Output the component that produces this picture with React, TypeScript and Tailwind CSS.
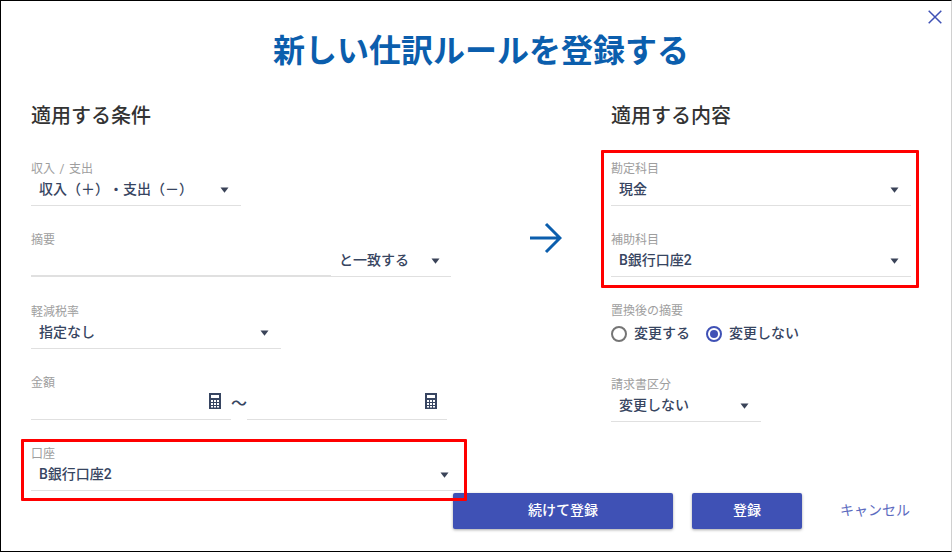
import type { ReactNode } from "react";

const fontStack = { fontFamily: '"Roboto", "Noto Sans CJK JP", sans-serif' };

function Caret() {
  return (
    <svg width="9" height="6" viewBox="0 0 9 6" className="shrink-0">
      <polygon points="0.5,0.5 8.5,0.5 4.5,5.8" fill="#3a4358" />
    </svg>
  );
}

function CalcIcon() {
  return (
    <svg width="12" height="16" viewBox="0 0 12 16" className="shrink-0">
      <path
        fill="#374561"
        fillRule="evenodd"
        d="M0 0h12v16H0z M2 2v3h8V2z M2 7v2h2V7z M5 7v2h2V7z M8 7v2h2V7z M2 10v2h2v-2z M5 10v2h2v-2z M8 10v2h2v-2z M2 13v1.5h2V13z M5 13v1.5h2V13z M8 13v1.5h2V13z"
      />
    </svg>
  );
}

function Label({ children }: { children: ReactNode }) {
  return (
    <div className="h-[16px] text-[12px] leading-[18px] text-[#9e9e9e] [word-spacing:1.5px]">{children}</div>
  );
}

function SelectField({
  label,
  value,
  className,
}: {
  label: string;
  value: string;
  className: string;
}) {
  return (
    <div className={className}>
      <Label>{label}</Label>
      <div className="flex h-[30px] items-center justify-between border-b border-[#e0e0e0] pb-[2px] pl-[8px] pr-[12px] text-[14px] font-medium text-[#374561] [text-spacing-trim:space-all]">
        <span>{value}</span>
        <Caret />
      </div>
    </div>
  );
}

function RadioOption({ label, checked }: { label: string; checked?: boolean }) {
  return (
    <div className="flex items-center gap-[7px]">
      <span
        className={`flex h-[16px] w-[16px] items-center justify-center rounded-full border-2 ${
          checked ? "border-[#3f51b5]" : "border-[#757575]"
        }`}
      >
        {checked && <span className="h-[8px] w-[8px] rounded-full bg-[#3f51b5]" />}
      </span>
      <span className="text-[14px] font-medium text-[#374561]">{label}</span>
    </div>
  );
}

export default function App() {
  return (
    <div
      style={fontStack}
      className="relative box-border flex h-[552px] w-[952px] flex-col overflow-hidden border border-r-[#d0d0d0] border-black bg-white"
    >
      {/* Close */}
      <svg width="14" height="14" viewBox="0 0 14 14" className="absolute left-[927px] top-[9px]">
        <path d="M0.7 0.7 13.3 13.3 M13.3 0.7 0.7 13.3" stroke="#3f51b5" strokeWidth="1.5" fill="none" />
      </svg>

      <h1 className="pl-[10px] pt-[30px] text-center text-[32px] font-bold leading-[40px] text-[#0b5ead]">
        新しい仕訳ルールを登録する
      </h1>

      <div className="mt-[29px] flex pl-[30px]">
        {/* 条件 */}
        <div className="w-[430px]">
          <h2 className="mb-[30px] h-[30px] text-[20px] font-medium leading-[32px] text-[#333333]">適用する条件</h2>

          <SelectField className="mb-[25px] w-[210px]" label="収入 / 支出" value="収入（＋）・支出（－）" />

          <div className="mb-[26px] w-[420px]">
            <Label>摘要</Label>
            <div className="flex h-[30px]">
              <div className="w-[300px] border-b-2 border-[#e0e0e0]" />
              <div className="flex w-[120px] items-center justify-between border-b border-[#e0e0e0] pb-[2px] pl-[8px] pr-[11px] text-[14px] font-medium text-[#374561]">
                <span>と一致する</span>
                <Caret />
              </div>
            </div>
          </div>

          <SelectField className="mb-[25px] w-[250px]" label="軽減税率" value="指定なし" />

          <div className="mb-[25px]">
            <Label>金額</Label>
            <div className="flex h-[30px]">
              <div className="flex w-[200px] items-start justify-end border-b border-[#e0e0e0] pr-[10px] pt-[3px]">
                <CalcIcon />
              </div>
              <div className="w-[16px] text-center text-[16px] font-medium leading-[28px] text-[#374561]">〜</div>
              <div className="flex w-[200px] items-start justify-end border-b border-[#e0e0e0] pr-[10px] pt-[3px]">
                <CalcIcon />
              </div>
            </div>
          </div>

          <SelectField className="w-[430px]" label="口座" value="B銀行口座2" />
        </div>

        {/* Arrow */}
        <svg width="32" height="32" viewBox="0 0 32 32" className="ml-[69px] mt-[122px] shrink-0 self-start">
          <path d="M0 16H30 M16 2 30 16 16 30" stroke="#0b5ead" strokeWidth="3" fill="none" />
        </svg>

        {/* 内容 */}
        <div className="ml-[49px] w-[300px]">
          <h2 className="mb-[30px] h-[30px] text-[20px] font-medium leading-[32px] text-[#333333]">適用する内容</h2>

          <SelectField className="mb-[25px]" label="勘定科目" value="現金" />
          <SelectField className="mb-[25px]" label="補助科目" value="B銀行口座2" />

          <div className="mb-[25px] h-[49px]">
            <Label>置換後の摘要</Label>
            <div className="mt-[5px] flex gap-[16px]">
              <RadioOption label="変更する" />
              <RadioOption label="変更しない" checked />
            </div>
          </div>

          <SelectField className="w-[150px]" label="請求書区分" value="変更しない" />
        </div>
      </div>

      {/* Actions */}
      <div className="mt-[2px] flex items-center pl-[452px]">
        <button
          type="button"
          className="h-[36px] w-[220px] rounded-[2px] bg-[#3f51b5] pb-[2px] text-[14px] font-medium text-white shadow-[0_1px_3px_rgba(0,0,0,0.35)]"
        >
          続けて登録
        </button>
        <button
          type="button"
          className="ml-[19px] h-[36px] w-[110px] rounded-[2px] bg-[#3f51b5] pb-[2px] text-[14px] font-medium text-white shadow-[0_1px_3px_rgba(0,0,0,0.35)]"
        >
          登録
        </button>
        <button type="button" className="ml-[38px] pb-[2px] text-[14px] text-[#5c6bc0]">
          キャンセル
        </button>
      </div>

      {/* Annotation frames */}
      <div className="absolute left-[600px] top-[149px] h-[138px] w-[318px] rounded-[1px] border-[3px] border-[#ff0000]" />
      <div className="absolute left-[20px] top-[438px] h-[62px] w-[446px] rounded-[1px] border-[3px] border-[#ff0000]" />
    </div>
  );
}
